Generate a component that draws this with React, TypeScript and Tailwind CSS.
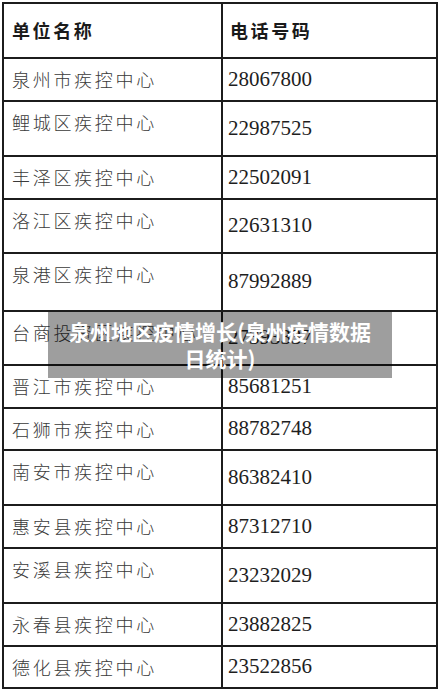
const rows: { name: string; phone: string; h: string }[] = [
  { name: "泉州市疾控中心", phone: "28067800", h: "h-[43px]" },
  { name: "鲤城区疾控中心", phone: "22987525", h: "h-[55px]" },
  { name: "丰泽区疾控中心", phone: "22502091", h: "h-[43px]" },
  { name: "洛江区疾控中心", phone: "22631310", h: "h-[54px]" },
  { name: "泉港区疾控中心", phone: "87992889", h: "h-[58px]" },
  { name: "台商投资区疾控中心", phone: "27393337", h: "h-[54px]" },
  { name: "晋江市疾控中心", phone: "85681251", h: "h-[43px]" },
  { name: "石狮市疾控中心", phone: "88782748", h: "h-[42px]" },
  { name: "南安市疾控中心", phone: "86382410", h: "h-[55px]" },
  { name: "惠安县疾控中心", phone: "87312710", h: "h-[43px]" },
  { name: "安溪县疾控中心", phone: "23232029", h: "h-[55px]" },
  { name: "永春县疾控中心", phone: "23882825", h: "h-[43px]" },
  { name: "德化县疾控中心", phone: "23522856", h: "h-[42px]" },
];

const cjk = "font-['Noto_Sans_CJK_SC',sans-serif]";

export default function App() {
  return (
    <div className="relative h-[692px] w-[442px] overflow-hidden bg-white">
      <div className="ml-[2px] mt-[2px] w-[436px] border-2 border-[#1c1c1c]">
        <div className="flex h-[53px]">
          <div
            className={`flex w-[219px] items-center border-r-2 border-[#1c1c1c] pl-[8px] text-[18px] font-bold tracking-[2.6px] text-[#1a1a1a] ${cjk}`}
          >
            单位名称
          </div>
          <div
            className={`flex flex-1 items-center pl-[7px] text-[18px] font-bold tracking-[2.6px] text-[#1a1a1a] ${cjk}`}
          >
            电话号码
          </div>
        </div>
        {rows.map((row) => (
          <div key={row.name} className={`flex border-t-2 border-[#1c1c1c] ${row.h}`}>
            <div
              className={`w-[219px] whitespace-nowrap border-r-2 border-[#1c1c1c] pl-[8px] pt-[8px] text-[18px] font-light leading-[24px] tracking-[2.7px] text-[#3a3a3a] ${cjk}`}
            >
              {row.name}
            </div>
            <div className="flex flex-1 items-center pl-[5px] font-['Liberation_Serif',serif] text-[21px] text-[#1e1e1e]">
              {row.phone}
            </div>
          </div>
        ))}
      </div>

      <div className="absolute left-[48px] top-[312px] flex h-[66px] w-[344px] items-center justify-center bg-black/[0.38] px-[20px]">
        <p
          className={`text-center text-[21px] font-bold leading-[27px] text-white ${cjk}`}
        >
          泉州地区疫情增长(泉州疫情数据日统计)
        </p>
      </div>
    </div>
  );
}
